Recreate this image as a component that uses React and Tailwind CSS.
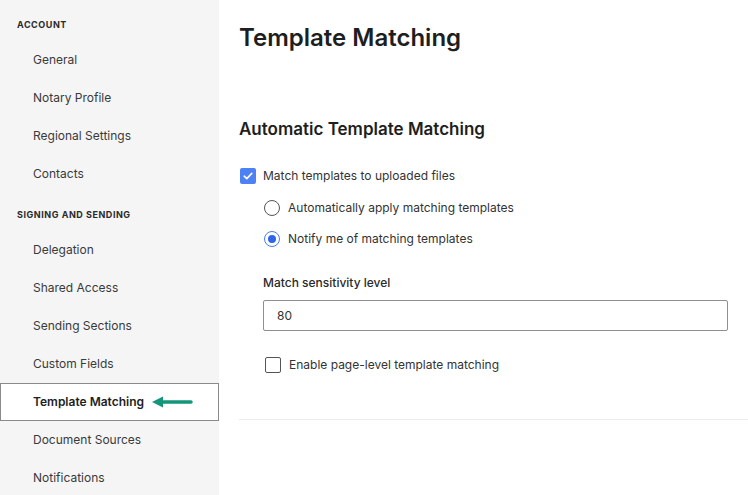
import React from 'react';

const account = ['General', 'Notary Profile', 'Regional Settings', 'Contacts'];
const signing = ['Delegation', 'Shared Access', 'Sending Sections', 'Custom Fields', 'Template Matching', 'Document Sources', 'Notifications'];

const NavItem = ({ label, active }) => (
  <div
    className={
      active
        ? 'h-[38px] flex items-center pl-[32px] bg-white border border-[#8a8a8a] text-[12px] font-semibold text-[#1e1e1e]'
        : 'h-[38px] flex items-center pl-[33px] text-[12px] text-[#3a3a3a]'
    }
  >
    {label}
    {active && (
      <svg width="44" height="14" viewBox="0 0 44 14" className="ml-[7px]">
        <path d="M10 7 H40" stroke="#14967a" strokeWidth="3.5" strokeLinecap="round" />
        <path d="M1 7 L12 1.5 L12 12.5 Z" fill="#14967a" />
      </svg>
    )}
  </div>
);

const Radio = ({ checked, label }) => (
  <div className="flex items-center h-[20px] pl-[25px]">
    <div className={`w-[16px] h-[16px] rounded-full border-[1.5px] flex items-center justify-center ${checked ? 'border-[#4b7df0]' : 'border-[#555]'}`}>
      {checked && <div className="w-[8px] h-[8px] rounded-full bg-[#2f66e8]" />}
    </div>
    <span className="ml-[8px] text-[12px] text-[#333]">{label}</span>
  </div>
);

export default function App() {
  return (
    <div className="flex w-[748px] h-[495px] bg-white overflow-hidden" style={{ fontFamily: 'Inter, "Noto Sans", sans-serif' }}>
      {/* Sidebar */}
      <div className="w-[219px] shrink-0 bg-[#f5f5f5]">
        <div className="h-[41px] pt-[9px] flex items-center pl-[17px] text-[9px] font-bold tracking-[0.06em] text-[#2a2a2a]">ACCOUNT</div>
        {account.map(l => <NavItem key={l} label={l} />)}
        <div className="h-[38px] pt-[6px] flex items-center pl-[17px] text-[9px] font-bold tracking-[0.06em] text-[#2a2a2a]">SIGNING AND SENDING</div>
        {signing.map(l => <NavItem key={l} label={l} active={l === 'Template Matching'} />)}
      </div>

      {/* Main */}
      <div className="flex-1 pl-[20px]">
        <h1 className="mt-[22px] h-[32px] leading-[32px] text-[24px] font-semibold text-[#1e1e1e]">Template Matching</h1>
        <h2 className="mt-[63px] h-[24px] leading-[24px] text-[17px] font-semibold text-[#1e1e1e]">Automatic Template Matching</h2>

        <div className="mt-[26px] flex items-center h-[18px] pl-[1px]">
          <div className="w-[16px] h-[16px] rounded-[2px] bg-[#4e82f4] flex items-center justify-center">
            <svg width="10" height="8" viewBox="0 0 10 8">
              <path d="M1.2 4.2 L3.8 6.6 L8.8 1.4" stroke="white" strokeWidth="1.6" fill="none" strokeLinecap="round" strokeLinejoin="round" />
            </svg>
          </div>
          <span className="ml-[7px] text-[12px] text-[#333]">Match templates to uploaded files</span>
        </div>

        <div className="mt-[13px] flex flex-col gap-[11px]">
          <Radio label="Automatically apply matching templates" />
          <Radio checked label="Notify me of matching templates" />
        </div>

        <div className="mt-[25px] pl-[24px] text-[12px] font-medium text-[#2a2a2a] leading-[18px]">Match sensitivity level</div>
        <div className="mt-[8px] ml-[24px] w-[465px] h-[31px] border border-[#8f8f8f] rounded-[2px] flex items-center pl-[13px] text-[12px] text-[#333]">80</div>

        <div className="mt-[25px] flex items-center h-[18px] pl-[26px]">
          <div className="w-[16px] h-[16px] rounded-[2px] border-[1.5px] border-[#555] bg-white" />
          <span className="ml-[8px] text-[12px] text-[#333]">Enable page-level template matching</span>
        </div>

        <div className="mt-[45px] h-px bg-[#ececec]" />
      </div>
    </div>
  );
}
